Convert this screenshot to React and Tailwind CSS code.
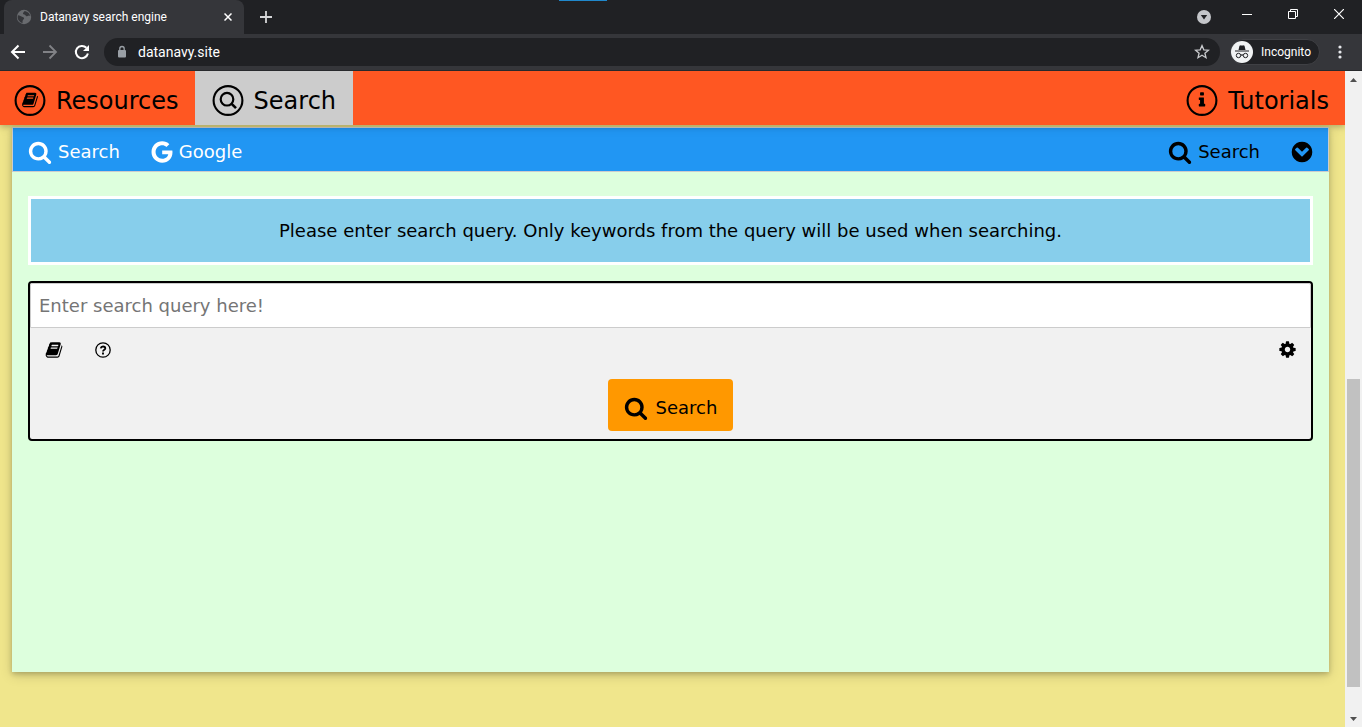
import React from "react";
import { FaGoogle } from "react-icons/fa";

const BOOK =
  "M1703 478q40 57 18 129l-275 906q-19 64-76.5 107.5t-122.5 43.5h-923q-77 0-148.5-53.5t-99.5-131.5q-24-67-2-127 0-4 3-27t4-37q1-8-3-21.5t-3-19.5q2-11 8-21t16.5-23.5 16.5-23.5q23-38 45-91.5t30-91.5q3-10 .5-30t-.5-28q3-11 17-28t17-23q21-36 42-92t25-90q1-9-2.5-32t.5-28q4-13 22-30.5t22-22.5q19-26 42.5-84.5t27.5-96.5q1-8-3-25.5t-2-26.5q2-8 9-18t18-23 17-21q8-12 16.5-30.5t15-35 16-36 19.5-32 26.5-23.5 36-11.5 47.5 5.5l-1 3q38-9 51-9h761q74 0 114 56t18 130l-274 906q-36 119-71.5 153.5t-128.5 34.5h-869q-27 0-38 15-11 16-1 43 24 70 144 70h923q29 0 56-15.5t35-41.5l300-987q7-22 5-57 38 15 59 43zm-1064 2q-4 13 2 22.5t20 9.5h608q13 0 25.5-9.5t16.5-22.5l21-64q4-13-2-22.5t-20-9.5h-608q-13 0-25.5 9.5t-16.5 22.5zm-83 256q-4 13 2 22.5t20 9.5h608q13 0 25.5-9.5t16.5-22.5l21-64q4-13-2-22.5t-20-9.5h-608q-13 0-25.5 9.5t-16.5 22.5z";
const SEARCH =
  "M1216 832q0-185-131.5-316.5t-316.5-131.5-316.5 131.5-131.5 316.5 131.5 316.5 316.5 131.5 316.5-131.5 131.5-316.5zm512 832q0 52-38 90t-90 38q-54 0-90-38l-343-342q-179 124-399 124-143 0-273.5-55.5t-225-150-150-225-55.5-273.5 55.5-273.5 150-225 225-150 273.5-55.5 273.5 55.5 225 150 150 225 55.5 273.5q0 220-124 399l343 343q37 37 37 90z";
const COG =
  "M1152 896q0-106-75-181t-181-75-181 75-75 181 75 181 181 75 181-75 75-181zm512-109v222q0 12-8 23t-20 13l-185 28q-19 54-39 91 35 50 107 138 10 12 10 25t-9 23q-27 37-99 108t-94 71q-12 0-26-9l-138-108q-44 23-91 38-16 136-29 186-7 28-36 28h-222q-14 0-24.5-8.5t-11.5-21.5l-28-184q-49-16-90-37l-141 107q-10 9-25 9-14 0-25-11-126-114-165-168-7-10-7-23 0-12 8-23 15-21 51-66.5t54-70.5q-27-50-41-99l-183-27q-13-2-21-12.5t-8-23.5v-222q0-12 8-23t19-13l186-28q14-46 39-92-40-57-107-138-10-12-10-24 0-10 9-23 26-36 98.5-107.5t94.5-71.5q13 0 26 10l138 107q44-23 91-38 16-136 29-186 7-28 36-28h222q14 0 24.5 8.5t11.5 21.5l28 184q49 16 90 37l142-107q9-9 24-9 13 0 25 10 129 119 165 170 7 8 7 22 0 12-8 23-15 21-51 66.5t-54 70.5q26 50 41 98l183 28q13 2 21 12.5t8 23.5z";
const CHEVRON_CIRCLE =
  "M941 1222l454-454q19-19 19-45t-19-45l-102-102q-19-19-45-19t-45 19l-307 307-307-307q-19-19-45-19t-45 19l-102 102q-19 19-19 45t19 45l454 454q19 19 45 19t45-19zm723-326q0 209-103 385.5t-279.5 279.5-385.5 103-385.5-103-279.5-279.5-103-385.5 103-385.5 279.5-279.5 385.5-103 385.5 103 279.5 279.5 103 385.5z";
const INFO =
  "M1216 1344v128q0 26-19 45t-45 19h-512q-26 0-45-19t-19-45v-128q0-26 19-45t45-19h64v-384h-64q-26 0-45-19t-19-45v-128q0-26 19-45t45-19h384q26 0 45 19t19 45v576h64q26 0 45 19t19 45zm-128-1152v192q0 26-19 45t-45 19h-256q-26 0-45-19t-19-45v-192q0-26 19-45t45-19h256q26 0 45 19t19 45z";

function Glyph({ d, className }) {
  return (
    <svg viewBox="0 0 1792 1792" fill="currentColor" aria-hidden="true" className={className}>
      <path d={d} />
    </svg>
  );
}

function Ringed({ d, size }) {
  const offset = (32 - size) / 2;
  return (
    <svg viewBox="0 0 32 32" className="size-8 shrink-0" aria-hidden="true">
      <circle cx="16" cy="15.500" r="14.4" fill="none" stroke="currentColor" strokeWidth="2.1" />
      <svg x={offset} y={offset - 1} width={size} height={size} viewBox="0 0 1792 1792">
        <path d={d} fill="currentColor" />
      </svg>
    </svg>
  );
}

function RingedSearch() {
  return (
    <svg viewBox="0 0 32 32" className="size-8 shrink-0" fill="none" stroke="currentColor" aria-hidden="true">
      <circle cx="16" cy="15.500" r="14.4" strokeWidth="2.1" />
      <circle cx="15" cy="14.2" r="6.300" strokeWidth="2.2" />
      <path d="M19.400 18.600l4.600 4.600" strokeWidth="2.6" />
    </svg>
  );
}

function QuestionCircle({ className }) {
  return (
    <svg viewBox="0 0 16 16" className={className} fill="none" stroke="currentColor" aria-hidden="true">
      <circle cx="8" cy="8" r="7.200" strokeWidth="1.300" />
      <path d="M5.700 6.400C6 5 6.900 4.500 8 4.500c1.300 0 2.300.8 2.300 1.900C10.300 7.700 8 7.800 8 9.600" strokeWidth="1.800" />
      <path d="M8 10.600v1.900" strokeWidth="1.900" />
    </svg>
  );
}

function BrowserChrome() {
  return (
    <header className="shrink-0 bg-[#202124] font-['Open_Sans',sans-serif] text-white">
      <div className="relative flex h-[34px] items-stretch">
        <div className="absolute top-0 left-[559px] h-px w-12 bg-[#2088cc]" />
        <div className="ml-1 flex w-60 items-center rounded-t-lg bg-[#35363a] pr-2 pl-3">
          <svg viewBox="0 0 16 16" className="size-4 shrink-0" aria-hidden="true">
            <circle cx="8" cy="8" r="7.2" fill="#696b6f" />
            <path d="M2 6.2c2 .2 3 1.4 4.6 1.7 1.800.3 1.900 1.500.800 2.500-.9.8-1 2-.8 3.600C3.700 13.500 1.600 10.800 1.600 8zM8.200 2.200c-.2 1.400-1.600 1.400-1.200 2.600.4 1 2 .6 2.600 1.600.6 1.200 2 1 2.800.4.6-.4 1.400-.2 1.900.4-.4-2.700-2.800-5.200-6.100-5z" fill="#35363a" />
          </svg>
          <span className="ml-2 grow font-['Roboto',sans-serif] text-xs whitespace-nowrap">Datanavy search engine</span>
          <button type="button" aria-label="Close tab" className="flex size-4 items-center justify-center">
            <svg viewBox="0 0 8 8" className="size-2" stroke="#fff" strokeWidth="1.5" aria-hidden="true">
              <path d="M.5.5l7 7M7.500.5l-7 7" />
            </svg>
          </button>
        </div>
        <button type="button" aria-label="New tab" className="ml-3.5 flex w-4 items-center justify-center">
          <svg viewBox="0 0 12 12" className="size-3" stroke="#d5d6d8" strokeWidth="1.800" aria-hidden="true">
            <path d="M6 0v12M0 6h12" />
          </svg>
        </button>
        <div className="ml-auto flex">
          <button type="button" aria-label="Search tabs" className="mr-3 flex w-4 items-center justify-center">
            <svg viewBox="0 0 14 14" className="size-3.5" aria-hidden="true">
              <circle cx="7" cy="7" r="7" fill="#c4c6ca" />
              <path d="M3.800 5h6.400L7 9.600z" fill="#202124" />
            </svg>
          </button>
          <button type="button" aria-label="Minimize" className="flex h-7 w-[46px] items-center justify-center">
            <svg viewBox="0 0 10 10" className="size-2.5" stroke="#fff" aria-hidden="true">
              <path d="M0 5.500h10" />
            </svg>
          </button>
          <button type="button" aria-label="Restore" className="flex h-7 w-[46px] items-center justify-center">
            <svg viewBox="0 0 10 10" className="size-2.5" fill="none" stroke="#fff" aria-hidden="true">
              <path d="M.5 2.500h7v7h-7zM2.500 2.500v-2h7v7h-2" />
            </svg>
          </button>
          <button type="button" aria-label="Close" className="flex h-7 w-[46px] items-center justify-center">
            <svg viewBox="0 0 10 10" className="size-2.5" stroke="#fff" strokeWidth="1.200" aria-hidden="true">
              <path d="M0 0l10 10M10 0L0 10" />
            </svg>
          </button>
        </div>
      </div>
      <div className="flex h-[37px] items-center border-b border-[#28292c] bg-[#35363a] pl-2.5">
        <button type="button" aria-label="Back" className="size-4">
          <svg viewBox="0 0 16 16" fill="none" stroke="#fff" strokeWidth="2" aria-hidden="true">
            <path d="M15 8H2.500M8.500 1.500L2 8l6.500 6.500" />
          </svg>
        </button>
        <button type="button" aria-label="Forward" className="ml-4 size-4">
          <svg viewBox="0 0 16 16" fill="none" stroke="#818286" strokeWidth="1.800" aria-hidden="true">
            <path d="M1 8h12.500M7.500 1.500L14 8l-6.500 6.500" />
          </svg>
        </button>
        <button type="button" aria-label="Reload" className="ml-4 size-4">
          <svg viewBox="0 0 16 16" fill="none" stroke="#fff" strokeWidth="2" aria-hidden="true">
            <path d="M13.900 9.500A6.100 6.100 0 1 1 12.400 3.800" />
            <path d="M15 1v6H9z" fill="#fff" stroke="none" />
          </svg>
        </button>
        <div className="ml-3.5 flex h-7 grow items-center rounded-full bg-[#202124] pr-2.5 pl-3">
          <svg viewBox="0 0 12 14" className="mr-2.5 h-3.5 w-3" aria-hidden="true">
            <rect x="2" y="5" width="8" height="7.500" rx="1" fill="#9aa0a6" />
            <path d="M3.800 5.500V3.700a2.200 2.200 0 0 1 4.400 0v1.800" fill="none" stroke="#9aa0a6" strokeWidth="1.300" />
          </svg>
          <input
            aria-label="Address"
            defaultValue="datanavy.site"
            className="h-7 min-w-0 grow bg-transparent font-['Roboto',sans-serif] text-sm text-white outline-none"
          />
          <button type="button" aria-label="Bookmark this page" className="size-4">
            <svg viewBox="0 0 16 16" fill="none" stroke="#c8cacd" strokeWidth="1.300" aria-hidden="true">
              <path d="M8 1.600l1.800 4.200 4.600.4-3.500 3 1.100 4.500L8 11.300l-4 2.400 1.100-4.500-3.500-3 4.600-.4z" />
            </svg>
          </button>
        </div>
        <button
          type="button"
          className="ml-2.5 flex h-[26px] items-center rounded-full border border-[#3f4044] bg-[#202124] pr-2 font-['Roboto',sans-serif] text-xs"
        >
          <svg viewBox="0 0 22 22" className="mr-2 size-[22px]" aria-hidden="true">
            <circle cx="11" cy="11" r="11" fill="#f1f3f4" />
            <path d="M7.500 9l1-4.200 1.500-.5 1 .4 1-.4 1.500.5 1 4.200z" fill="#202124" />
            <path d="M4 10h14M9.700 14.300q1.300-.8 2.600 0" fill="none" stroke="#202124" strokeWidth="1.200" />
            <circle cx="7.500" cy="14.500" r="2.200" fill="none" stroke="#202124" />
            <circle cx="14.500" cy="14.500" r="2.200" fill="none" stroke="#202124" />
          </svg>
          Incognito
        </button>
        <button type="button" aria-label="Browser menu" className="mr-3.5 ml-3 size-4">
          <svg viewBox="0 0 16 16" fill="#e8eaed" aria-hidden="true">
            <circle cx="8" cy="3" r="1.600" />
            <circle cx="8" cy="8" r="1.600" />
            <circle cx="8" cy="13" r="1.600" />
          </svg>
        </button>
      </div>
    </header>
  );
}

function SiteNav() {
  return (
    <nav className="relative z-10 flex h-[54px] shrink-0 bg-[#ff5722] text-2xl shadow-[0_2px_5px_0_rgba(0,0,0,0.16),0_2px_10px_0_rgba(0,0,0,0.12)]">
      <a href="#resources" className="flex items-center gap-2.5 px-4 pt-1.5 pl-3.5">
        <Ringed d={BOOK} size={17} />
        Resources
      </a>
      <a href="#search" className="flex items-center gap-2.5 bg-[#ccc] px-[17px] pt-1.5">
        <RingedSearch />
        Search
      </a>
      <a href="#tutorials" className="ml-auto flex items-center gap-2.5 px-4 pt-1.5">
        <Ringed d={INFO} size={18} />
        Tutorials
      </a>
    </nav>
  );
}

function EngineBar() {
  return (
    <div className="flex h-[45px] items-center justify-between border border-[#ccc] bg-[#2196f3] pt-1">
      <div className="flex text-white">
        <a href="#engine-search" className="flex items-center gap-1.5 pr-4 pl-[15px]">
          <Glyph d={SEARCH} className="size-6" />
          Search
        </a>
        <a href="#engine-google" className="flex items-center gap-1.5 pr-4 pl-[15px]">
          <FaGoogle className="size-[22px]" aria-hidden="true" />
          Google
        </a>
      </div>
      <div className="flex">
        <button type="button" className="flex items-center gap-1.5 px-4">
          <Glyph d={SEARCH} className="size-6" />
          Search
        </button>
        <button type="button" aria-label="More search engines" className="px-3.5">
          <Glyph d={CHEVRON_CIRCLE} className="size-6" />
        </button>
      </div>
    </div>
  );
}

function SearchForm() {
  return (
    <form className="mt-4 rounded border-2 border-black bg-[#f1f1f1] pb-2" onSubmit={(e) => e.preventDefault()}>
      <input
        type="text"
        aria-label="Search query"
        placeholder="Enter search query here!"
        className="block h-[45px] w-full rounded-t-xs border border-[#ccc] bg-white px-2 outline-none placeholder:text-[#757575]"
      />
      <div className="flex h-[43px] items-center pr-3.5 pl-[15px]">
        <button type="button" aria-label="Resources">
          <Glyph d={BOOK} className="size-[18px]" />
        </button>
        <button type="button" aria-label="Help" className="ml-8">
          <QuestionCircle className="size-4" />
        </button>
        <button type="button" aria-label="Settings" className="ml-auto">
          <Glyph d={COG} className="size-[19px]" />
        </button>
      </div>
      <div className="flex justify-center pt-2">
        <button type="submit" className="flex h-[52px] items-center gap-2 rounded bg-[#ff9800] px-4 pt-1.5">
          <Glyph d={SEARCH} className="size-6" />
          Search
        </button>
      </div>
    </form>
  );
}

function Scrollbar() {
  return (
    <div className="flex w-[17px] shrink-0 flex-col items-center bg-[#f1f1f1]">
      <button type="button" aria-label="Scroll up" className="flex h-[17px] w-full items-center justify-center">
        <svg viewBox="0 0 7 4" className="h-1 w-[7px]" aria-hidden="true">
          <path d="M0 4L3.500 0 7 4z" fill="#505050" />
        </svg>
      </button>
      <div className="grow-[291]" />
      <div className="w-[13px] grow-[308] bg-[#c1c1c1]" />
      <div className="grow-[23]" />
      <button type="button" aria-label="Scroll down" className="flex h-[17px] w-full items-center justify-center">
        <svg viewBox="0 0 7 4" className="h-1 w-[7px]" aria-hidden="true">
          <path d="M0 0h7L3.500 4z" fill="#505050" />
        </svg>
      </button>
    </div>
  );
}

export default function App() {
  return (
    <div className="flex min-h-screen flex-col">
      <BrowserChrome />
      <div className="flex grow">
        <div className="flex min-w-0 grow flex-col overflow-hidden bg-[#f0e68c] font-['Verdana','DejaVu_Sans',sans-serif] text-lg text-black">
          <SiteNav />
          <main className="mt-0.5 mr-4 mb-[55px] ml-3 grow bg-[#ddffdd] shadow-[0_2px_5px_0_rgba(0,0,0,0.2),0_3px_12px_0_rgba(0,0,0,0.16)]">
            <EngineBar />
            <div className="px-4 pt-6 pb-4">
              <p className="border-[3px] border-white bg-[#87ceeb] px-4 pt-[18px] pb-[17px] text-center">
                Please enter search query. Only keywords from the query will be used when searching.
              </p>
              <SearchForm />
            </div>
          </main>
        </div>
        <Scrollbar />
      </div>
    </div>
  );
}
